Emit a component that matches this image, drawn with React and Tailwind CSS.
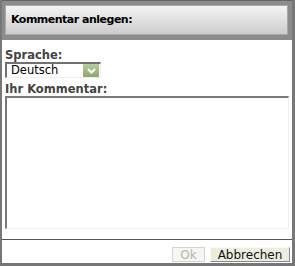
import React from 'react';

const font = { fontFamily: '"DejaVu Sans", Verdana, sans-serif' };

export default function App() {
  return (
    <div
      className="w-[295px] h-[266px] bg-white flex flex-col border-l-2 border-r-[3px] border-b-[3px] border-[#777777]"
      style={font}
    >
      {/* Header */}
      <div className="h-[40px] bg-[#8c8c8c] border-t border-[#666666] pt-[4px] pl-[3px] pr-[4px]">
        <div className="h-[30px] flex items-center pl-[5px] border border-[#a8a8a8] bg-gradient-to-b from-[#f4f4f4] to-[#cdcdcd]">
          <span className="text-[11px] tracking-[-0.5px] font-bold text-black">Kommentar anlegen:</span>
        </div>
      </div>

      {/* Body */}
      <div className="pt-[9px] px-[3px] flex flex-col">
        <label className="text-[11.5px] leading-[13px] font-bold text-[#444444]">Sprache:</label>
        <div className="w-[96px] h-[16px] flex items-center border-t-2 border-l-2 border-[#707070] border-r border-b border-r-[#eeeeee] border-b-[#eeeeee] bg-white">
          <span className="flex-1 pl-[4px] text-[11.5px] text-black">Deutsch</span>
          <span className="w-[16px] h-[13px] mr-[1px] flex items-center justify-center bg-gradient-to-b from-[#b8cc9c] to-[#8ca96c]">
            <svg width="9" height="6" viewBox="0 0 9 6">
              <path d="M1 1l3.5 3.5L8 1" fill="none" stroke="#ffffff" strokeWidth="2" />
            </svg>
          </span>
        </div>
        <label className="mt-[4px] text-[11.5px] leading-[14px] font-bold text-[#444444]">Ihr Kommentar:</label>
        <textarea className="w-[284px] h-[133px] resize-none outline-none border-t-2 border-l-2 border-[#7a7a7a] border-r border-b border-r-[#f0efe8] border-b-[#f0efe8] bg-white" />
      </div>

      {/* Footer */}
      <div className="mt-[10px] border-t border-[#555555] pt-[7px] pr-[2px] flex justify-end gap-[5px]">
        <button
          disabled
          className="w-[33px] h-[15px] flex items-center justify-center text-[12px] text-[#b4b4b4] bg-[#f6f6f2] border border-[#d4d4cc]"
        >
          Ok
        </button>
        <button className="w-[80px] h-[15px] flex items-center justify-center text-[12px] text-[#111111] bg-[#ededdf] border border-[#f8f8f0] border-r-[#8a8a8a] border-b-[#8a8a8a]">
          Abbrechen
        </button>
      </div>
    </div>
  );
}
